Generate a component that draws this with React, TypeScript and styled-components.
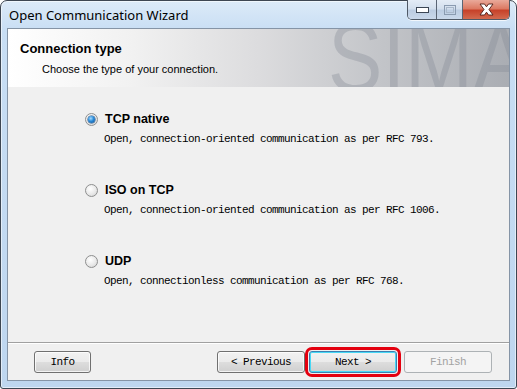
import React, { useState } from "react";
import styled, { createGlobalStyle } from "styled-components";

const GlobalStyle = createGlobalStyle`
  html, body {
    margin: 0;
    padding: 0;
    background: #ffffff;
  }
  body {
    width: 517px;
    height: 389px;
    overflow: hidden;
  }
`;

const Window = styled.div`
  box-sizing: border-box;
  width: 517px;
  height: 389px;
  border: 1px solid #3d4652;
  border-radius: 7px 7px 3px 3px;
  background: linear-gradient(#dceaf8 0px, #c8def4 30px, #bed6ef 100%);
  box-shadow: inset 0 0 0 1px rgba(255, 255, 255, 0.55);
  display: flex;
  flex-direction: column;
  font-family: "Liberation Sans", Arial, sans-serif;
`;

const TitleBar = styled.div`
  height: 27px;
  display: flex;
  justify-content: space-between;
  padding-left: 8px;
  padding-right: 6px;
`;

const Title = styled.div`
  font-family: "Noto Sans", "Open Sans", sans-serif;
  font-size: 13px;
  color: #000000;
  line-height: 27px;
  padding-top: 1px;
`;

const CaptionGroup = styled.div`
  display: flex;
  align-self: flex-start;
  margin-top: -1px;
  height: 19px;
  border: 1px solid #4f5966;
  border-top: none;
  border-radius: 0 0 5px 5px;
  overflow: hidden;
  box-shadow: 0 1px 0 rgba(255, 255, 255, 0.7);
`;

const CaptionButton = styled.div<{ $w: number; $close?: boolean }>`
  width: ${(p) => p.$w}px;
  height: 19px;
  display: flex;
  align-items: center;
  justify-content: center;
  background: ${(p) =>
    p.$close
      ? "linear-gradient(#e9a99a 0%, #dc7a63 45%, #c7422a 55%, #d26a4f 100%)"
      : "linear-gradient(#e4ecf6 0%, #d3dfed 45%, #bccde2 55%, #c9d8ea 100%)"};
  & + & {
    border-left: 1px solid #5a6574;
  }
`;

const Client = styled.div`
  flex: 1;
  margin: 0 6px 7px 6px;
  border: 1px solid #8594a6;
  display: flex;
  flex-direction: column;
  background: #f0f0f0;
`;

const Header = styled.div`
  position: relative;
  height: 58px;
  overflow: hidden;
  background: linear-gradient(
    to right,
    #ffffff 0%,
    #f1f1f1 25%,
    #dcdcde 50%,
    #c2c4c8 75%,
    #aaadb3 100%
  );
  padding: 12px 0 0 12px;
  box-sizing: border-box;
`;

const Watermark = styled.div`
  position: absolute;
  left: 320px;
  top: -19px;
  font-family: "Liberation Sans", Arial, sans-serif;
  font-size: 96px;
  color: rgba(132, 138, 150, 0.36);
  line-height: 1;
  white-space: nowrap;
  transform: scaleX(0.85);
  transform-origin: left top;
  pointer-events: none;
`;

const HeaderTitle = styled.div`
  position: relative;
  font-weight: bold;
  font-size: 13px;
  color: #000000;
  line-height: 16px;
`;

const HeaderSub = styled.div`
  position: relative;
  font-size: 11px;
  color: #000000;
  line-height: 16px;
  margin-top: 4px;
  padding-left: 22px;
`;

const Body = styled.div`
  flex: 1;
  padding: 25px 0 0 77px;
  display: flex;
  flex-direction: column;
  gap: 37px;
`;

const Option = styled.div`
  display: flex;
  flex-direction: column;
`;

const OptionRow = styled.label`
  display: flex;
  align-items: center;
  gap: 7px;
  height: 14px;
  cursor: pointer;
`;

const Radio = styled.span<{ $on: boolean }>`
  box-sizing: border-box;
  width: 13px;
  height: 13px;
  border-radius: 50%;
  border: 1px solid #8e8f8f;
  background: radial-gradient(circle at 40% 35%, #ffffff 0%, #e9e9e9 55%, #cfcfcf 100%);
  display: flex;
  align-items: center;
  justify-content: center;
  &::after {
    content: "";
    display: ${(p) => (p.$on ? "block" : "none")};
    width: 7px;
    height: 7px;
    border-radius: 50%;
    background: radial-gradient(circle at 40% 35%, #a8dcff 0%, #2a8ad8 45%, #0d4a8e 100%);
    box-shadow: 0 0 0 0.5px #1d4f82;
  }
`;

const OptionLabel = styled.span`
  font-weight: bold;
  font-size: 12.5px;
  color: #000000;
`;

const Desc = styled.div`
  font-family: "Liberation Mono", "Courier New", monospace;
  font-size: 11px;
  letter-spacing: -0.6px;
  color: #000000;
  margin-top: 7px;
  padding-left: 19px;
  line-height: 13px;
`;

const Footer = styled.div`
  height: 38px;
  border-top: 1px solid #a0a0a0;
  box-shadow: inset 0 1px 0 #ffffff;
  display: flex;
  align-items: flex-start;
  padding: 8px 17px 0 26px;
  box-sizing: border-box;
`;

const Spacer = styled.div`
  flex: 1;
`;

const Button = styled.button<{ $w: number; $focus?: boolean; $mark?: boolean }>`
  box-sizing: border-box;
  width: ${(p) => p.$w}px;
  height: 22px;
  padding: 0;
  border: 1px solid ${(p) => (p.$focus ? "#3c7fb1" : "#707070")};
  border-radius: 3px;
  background: linear-gradient(#f2f2f2 0%, #ebebeb 48%, #dddddd 52%, #cfcfcf 100%);
  box-shadow: inset 0 0 0 1px ${(p) => (p.$focus ? "#48d8f5" : "rgba(255,255,255,0.75)")};
  font-family: "Liberation Mono", "Courier New", monospace;
  font-size: 11px;
  letter-spacing: -0.6px;
  color: #000000;
  cursor: pointer;
  outline: ${(p) => (p.$mark ? "3px solid #e4000f" : "none")};
  outline-offset: 1px;
  &:disabled {
    border-color: #adb2b5;
    background: #f4f4f4;
    box-shadow: none;
    color: #a3a3a3;
    cursor: default;
  }
`;

const options = [
  {
    id: "tcp",
    label: "TCP native",
    desc: "Open, connection-oriented communication as per RFC 793.",
  },
  {
    id: "iso",
    label: "ISO on TCP",
    desc: "Open, connection-oriented communication as per RFC 1006.",
  },
  {
    id: "udp",
    label: "UDP",
    desc: "Open, connectionless communication as per RFC 768.",
  },
];

function App() {
  const [selected, setSelected] = useState("tcp");

  return (
    <>
      <GlobalStyle />
      <Window>
        <TitleBar>
          <Title>Open Communication Wizard</Title>
          <CaptionGroup>
            <CaptionButton $w={28}>
              <svg width="13" height="6" viewBox="0 0 13 6">
                <rect x="0.5" y="0.5" width="12" height="5" fill="#ffffff" stroke="#3b4654" />
              </svg>
            </CaptionButton>
            <CaptionButton $w={25}>
              <svg width="12" height="10" viewBox="0 0 12 10">
                <rect x="0.5" y="0.5" width="11" height="9" fill="none" stroke="#8a9bb0" />
                <rect x="2.5" y="2.5" width="7" height="5" fill="none" stroke="#a9b8ca" />
              </svg>
            </CaptionButton>
            <CaptionButton $w={46} $close>
              <svg width="15" height="13" viewBox="0 0 15 13">
                <path
                  d="M1 1 L5.5 1 L7.5 3.8 L9.5 1 L14 1 L10 6.5 L14 12 L9.5 12 L7.5 9.2 L5.5 12 L1 12 L5 6.5 Z"
                  fill="#ffffff"
                  stroke="#4a1c14"
                  strokeWidth="0.9"
                  strokeLinejoin="round"
                />
              </svg>
            </CaptionButton>
          </CaptionGroup>
        </TitleBar>
        <Client>
          <Header>
            <Watermark aria-hidden="true">SIMA</Watermark>
            <HeaderTitle>Connection type</HeaderTitle>
            <HeaderSub>Choose the type of your connection.</HeaderSub>
          </Header>
          <Body>
            {options.map((o) => (
              <Option key={o.id}>
                <OptionRow onClick={() => setSelected(o.id)}>
                  <Radio $on={selected === o.id} />
                  <OptionLabel>{o.label}</OptionLabel>
                </OptionRow>
                <Desc>{o.desc}</Desc>
              </Option>
            ))}
          </Body>
          <Footer>
            <Button $w={57}>Info</Button>
            <Spacer />
            <Button $w={88} style={{ marginRight: 4 }}>
              &lt; Previous
            </Button>
            <Button $w={88} $focus $mark style={{ marginRight: 7 }}>
              Next &gt;
            </Button>
            <Button $w={88} disabled>
              Finish
            </Button>
          </Footer>
        </Client>
      </Window>
    </>
  );
}

export default App;
